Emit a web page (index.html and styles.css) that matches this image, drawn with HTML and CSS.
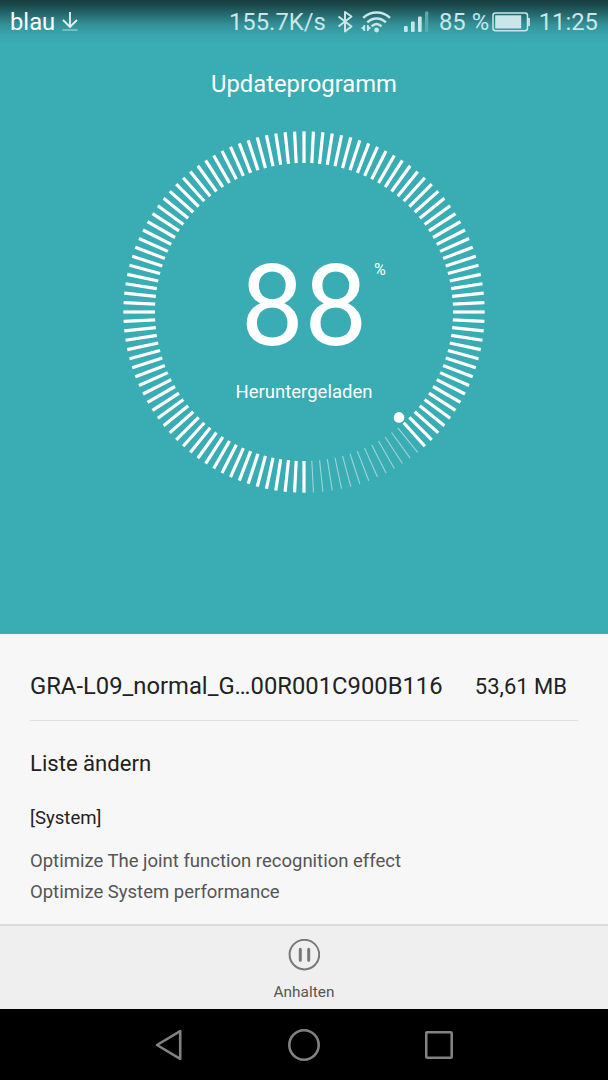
FILE: index.html
```html
<!DOCTYPE html>
<html lang="de">
<head>
    <meta charset="UTF-8">
    <meta name="viewport" content="width=device-width, initial-scale=1.0">
    <title>Updateprogramm</title>
    <link rel="stylesheet" href="styles.css">
</head>
<body>
    <div class="screen">
        <section class="hero">
            <div class="statusbar">
                <span class="carrier">blau</span>
                <svg class="download" width="18" height="22" viewBox="0 0 18 22" fill="none" stroke="#e4f3f4" stroke-width="1.8">
                    <path d="M9 1v15M2 9l7 7 7-7"/>
                    <path d="M1.5 19h15" stroke="#75c3c9"/>
                </svg>
                <span class="speed">155.7K/s</span>
                <svg class="bluetooth" width="18" height="24" viewBox="0 0 18 24" fill="none" stroke="#c9e6e8" stroke-width="2" stroke-linejoin="round">
                    <path d="M2.5 6.5l13 10-6.5 5V2l6.5 4.5-13 10"/>
                </svg>
                <svg class="wifi" width="32" height="24" viewBox="0 0 32 24" fill="none" stroke="#c9e6e8" stroke-width="2.5">
                    <path d="M3.2 7.8c7.4-7 19.4-7 26.8 0M7.3 12.3c5.4-5.2 13.2-5.2 18.6 0M11.6 16.4c3.2-3 6.8-3 10 0"/>
                    <circle cx="16.6" cy="20" r="2.4" fill="#c9e6e8" stroke="none"/>
                    <path d="M4.3 15v6M7.8 15v6" stroke-width="1.7"/>
                    <path d="M4.8 20.7L.8 18l4-2.6zM7.5 15.4l3.8 2.6-3.8 2.6z" fill="#c9e6e8" stroke="none"/>
                </svg>
                <svg class="signal" width="26" height="24" viewBox="0 0 26 24" fill="#c9e6e8">
                    <rect x="1" y="16" width="3.7" height="6" rx="1"/>
                    <rect x="8" y="11.5" width="3.7" height="10.5" rx="1"/>
                    <rect x="15" y="6.5" width="3.7" height="15.5" rx="1"/>
                    <rect x="22" y="1.5" width="3.3" height="20.5" rx="1" fill="#58abb1"/>
                </svg>
                <span class="percent">85 %</span>
                <svg class="battery" width="38" height="20" viewBox="0 0 38 20" fill="none" stroke="#c9e6e8" stroke-width="1.5">
                    <rect x="1" y="1" width="34.5" height="17.8" rx="2.5"/>
                    <path d="M37 6v8" stroke-width="1.8"/>
                    <rect x="3.2" y="3.3" width="26" height="13.2" fill="#c9e6e8" stroke="none"/>
                </svg>
                <span class="clock">11:25</span>
            </div>

            <h1>Updateprogramm</h1>

            <div class="dial">
                <svg id="ring" width="364" height="364" viewBox="-182 -182 364 364">
                    <circle class="knob" cx="95" cy="105.4" r="5.3"/>
                </svg>
                <div class="readout">
                    <div class="value">88<span class="unit">%</span></div>
                    <div class="state">Heruntergeladen</div>
                </div>
            </div>
        </section>

        <section class="details">
            <div class="package">
                <span class="name">GRA-L09_normal_G…00R001C900B116</span>
                <span class="size">53,61 MB</span>
            </div>
            <h2>Liste ändern</h2>
            <h3>[System]</h3>
            <p>Optimize The joint function recognition effect<br>Optimize System performance</p>
        </section>

        <div class="toolbar">
            <svg width="32" height="32" viewBox="0 0 32 32" fill="none" stroke="#777">
                <circle cx="16.4" cy="15.6" r="14.8" stroke-width="2"/>
                <path d="M12.3 10.3v10.9M20.7 10.3v10.9" stroke-width="3" stroke-linecap="round"/>
            </svg>
            <span>Anhalten</span>
        </div>

        <nav class="navbar">
            <svg width="30" height="34" viewBox="0 0 30 34"><path d="M4 17L27.2 3.2v27.6z"/></svg>
            <svg width="34" height="34" viewBox="0 0 34 34"><circle cx="17" cy="17" r="14.7"/></svg>
            <svg width="30" height="34" viewBox="0 0 30 34"><rect x="1.2" y="4.2" width="25.5" height="25.5" rx="1"/></svg>
        </nav>
    </div>

    <script>
        // 120 ticks, clockwise fill starts at the bottom
        const ring = document.getElementById("ring");
        const remaining = 14;
        for (let i = 0; i < 120; i++) {
            const tick = document.createElementNS("http://www.w3.org/2000/svg", "line");
            tick.setAttribute("y1", 149);
            tick.setAttribute("y2", 180.7);
            tick.setAttribute("transform", `rotate(${-i * 3})`);
            tick.setAttribute("class", i > 0 && i < remaining ? "tick" : "tick done");
            ring.appendChild(tick);
        }
    </script>
</body>
</html>
```
FILE: styles.css
```css
body { margin: 0; background: #000; font-family: Roboto, "Liberation Sans", sans-serif; }
.screen { width: 608px; height: 1080px; display: flex; flex-direction: column; overflow: hidden; }
.hero { height: 634px; background: linear-gradient(#173f41 0, #1a4648 4px, #246569 13px, #328f95 24px, #38a5ab 34px, #3aacb3 44px); color: #fff; }

.statusbar { height: 44px; display: flex; align-items: center; box-sizing: border-box; padding: 0 10px; font-size: 23.8px; line-height: 45px; color: #c9e6e8; white-space: nowrap; }
.statusbar svg { flex: none; }
.carrier { color: #fff; width: 51px; }
.download { margin-top: -1px; }
.speed { width: 97px; margin-left: 150px; }
.bluetooth { margin-left: 10px; margin-top: -1px; }
.wifi { margin-left: 6px; margin-top: -1px; }
.signal { margin-left: 11px; margin-top: -1px; }
.percent { margin-left: 10px; width: 49px; }
.battery { margin-left: 4px; }
.clock { margin-left: auto; }

h1 { margin: 22px 0 0; font-size: 23.8px; line-height: 36px; font-weight: 400; text-align: center; }
.dial { display: grid; justify-content: center; margin-top: 28px; }
.dial > * { grid-area: 1 / 1; }
.tick { stroke: rgba(255, 255, 255, 0.5); stroke-width: 1.1; }
.tick.done { stroke: #fff; stroke-width: 3.2; }
.knob { fill: #fff; }
.readout { text-align: center; padding-top: 120px; }
.value { position: relative; font-size: 113px; line-height: 114px; }
.unit { position: absolute; left: 252px; top: 10px; font-size: 16px; line-height: 20px; }
.state { margin-top: 16px; font-size: 18.5px; line-height: 24px; }

.details { height: 290px; padding: 0 30px; box-sizing: border-box; background: #f7f7f7; color: #222; }
.package { height: 87px; padding: 18px 11px 0 0; box-sizing: border-box; display: flex; justify-content: space-between; align-items: center; border-bottom: 1px solid #dfdfdf; }
.name { font-size: 23.8px; }
.size { font-size: 22px; }
h2 { margin: 27px 0 0; font-size: 22.1px; line-height: 30px; font-weight: 400; }
h3 { margin: 28px 0 0; font-size: 18.6px; line-height: 24px; font-weight: 400; }
.details p { margin: 16px 0 0; font-size: 18.5px; line-height: 30.5px; color: #555; }

.toolbar { height: 85px; box-sizing: border-box; padding-top: 13px; display: flex; flex-direction: column; align-items: center; gap: 11px; background: #efefef; border-top: 2px solid #dcdcdc; color: #555; font-size: 15.4px; line-height: 20px; }

.navbar { flex: 1; display: flex; justify-content: center; align-items: center; gap: 104px; background: #000; }
.navbar svg { fill: none; stroke: #828282; stroke-width: 2.6; stroke-linejoin: round; }
```
